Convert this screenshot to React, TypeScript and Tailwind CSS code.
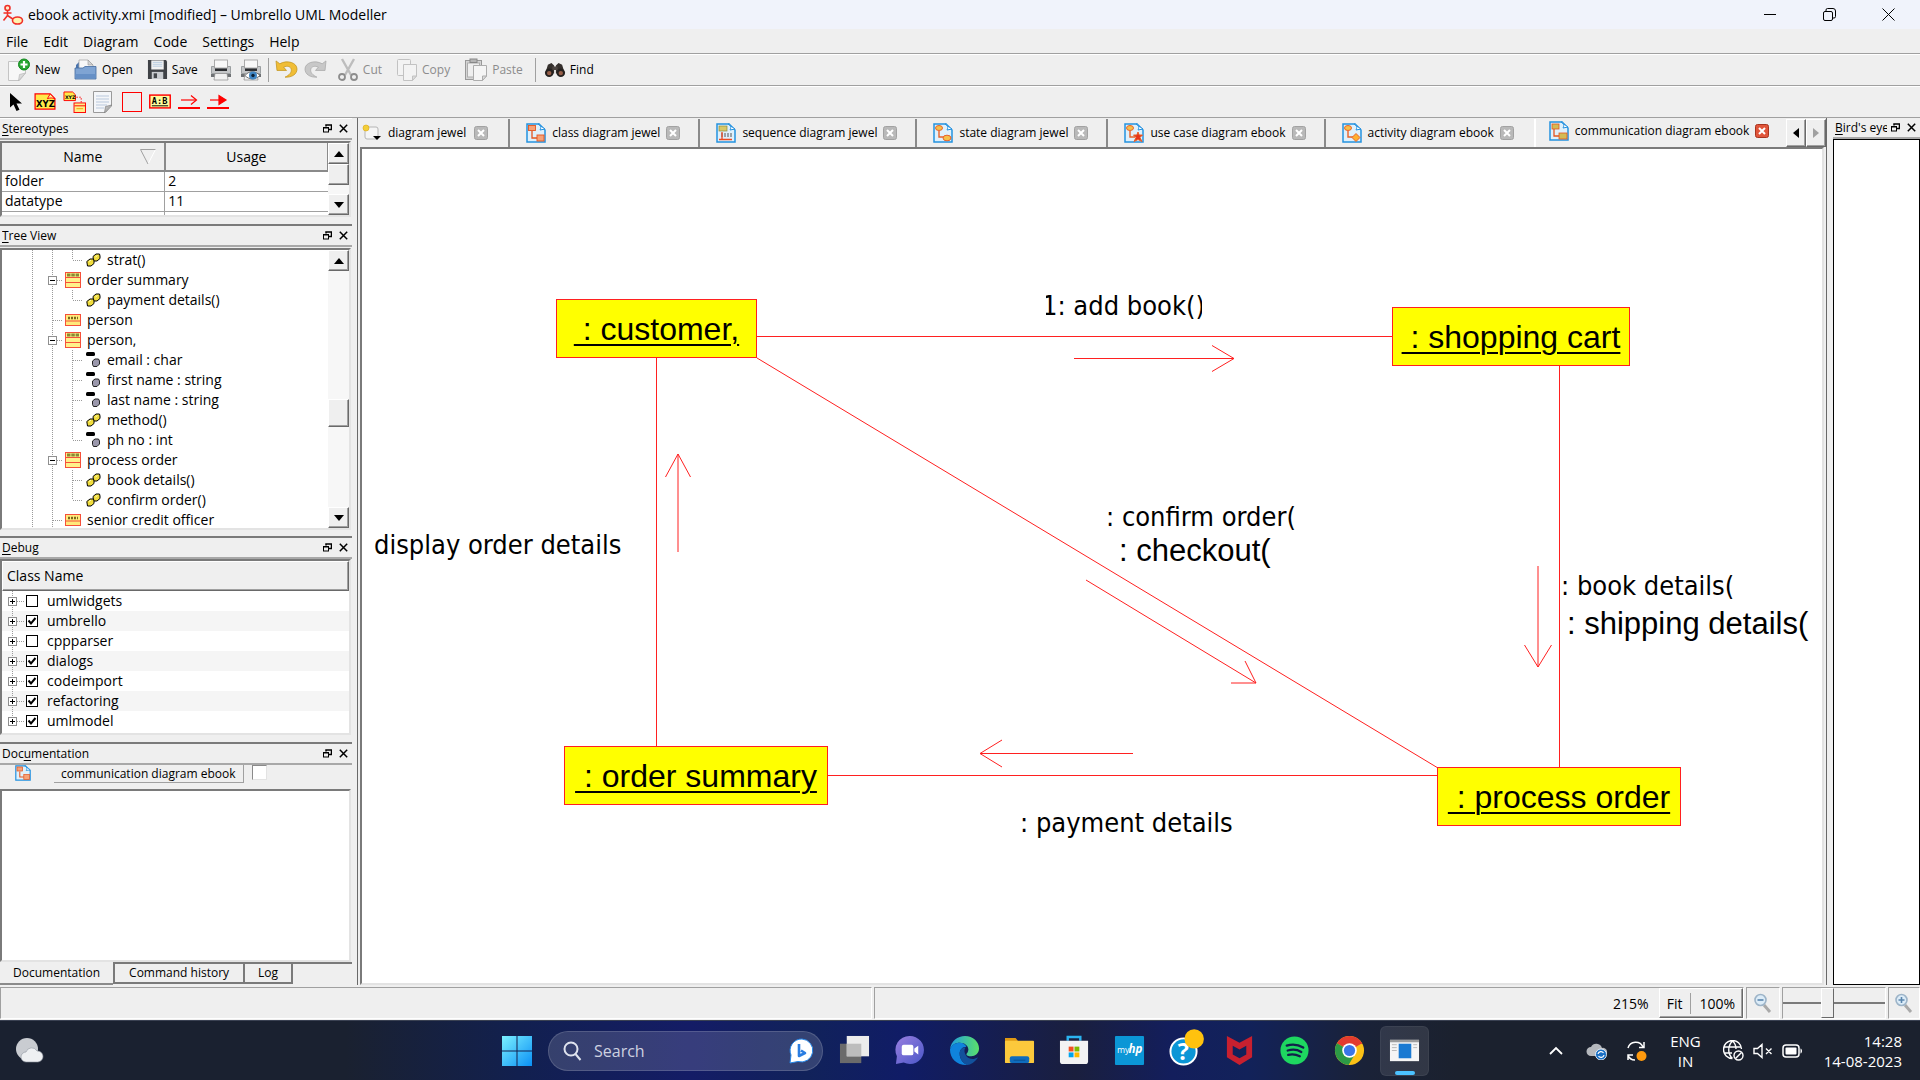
import React from "react";

const UI = "font-['Open_Sans','Noto_Sans',sans-serif]";
const RAISED =
  "bg-[#efefef] border border-t-white border-l-white border-r-[#696969] border-b-[#696969] shadow-[inset_-1px_-1px_0_#a0a0a0]";
const SUNKEN =
  "border-2 border-t-[#7a7a7a] border-l-[#7a7a7a] border-r-[#e3e3e3] border-b-[#e3e3e3]";

/* ---------- small drawings ---------- */

function AppLogo() {
  return (
    <svg width="22" height="22" viewBox="0 0 22 22" fill="none" stroke="#f03028" strokeWidth="1.6">
      <circle cx="5.500" cy="4" r="2.500" fill="#ffe9c8" />
      <path d="M5.500 6.500v5M1.500 9h8M5.500 11.500l-4 5M5.500 11.500l6 4" />
      <ellipse cx="15.500" cy="16.500" rx="5" ry="3.500" fill="#fff3b0" />
    </svg>
  );
}
function FloatIcon() {
  return (
    <svg width="9" height="9" viewBox="0 0 9 9" fill="none" stroke="#000" strokeWidth="1">
      <path d="M3 2.500V1h5.500v4.500H6M3 1h5.500" strokeWidth="1.500" />
      <rect x="0.500" y="3.500" width="5" height="4.500" />
      <path d="M0.500 4h5" />
    </svg>
  );
}
function CrossIcon() {
  return (
    <svg width="9" height="9" viewBox="0 0 9 9" stroke="#000" strokeWidth="1.5">
      <path d="M0.800 0.800l7.400 7.400M8.200 0.800L0.800 8.200" />
    </svg>
  );
}
function NewIcon() {
  return (
    <svg width="24" height="24" viewBox="0 0 24 24">
      <path d="M1.500 3.500h17V15l-6 7.500h-11z" fill="#f7f7f7" stroke="#c4c4c4" />
      <path d="M18.500 15l-7 7.500 1-6z" fill="#dcdcdc" stroke="#b0b0b0" strokeWidth=".6" />
      <circle cx="17" cy="6.500" r="5.500" fill="#2aa533" stroke="#128a1e" />
      <path d="M17 3v7M13.500 6.500h7" stroke="#fff" strokeWidth="2.200" />
    </svg>
  );
}
function OpenIcon() {
  return (
    <svg width="24" height="24" viewBox="0 0 24 24">
      <path d="M2 7l3-3h6v8H2z" fill="#4873ad" />
      <path d="M5 2h9l5 5v8H5z" fill="#f8f8f8" stroke="#a9a9a9" strokeWidth=".8" />
      <path d="M14 2v5h5z" fill="#d5d5d5" stroke="#999" strokeWidth=".6" />
      <path d="M1 10h8l2-1.500h11V21H1z" fill="#7fa4d3" stroke="#41699f" strokeWidth=".8" />
      <path d="M1.500 16h20v4.500h-20z" fill="#6690c6" />
    </svg>
  );
}
function SaveIcon() {
  return (
    <svg width="21" height="21" viewBox="0 0 22 22">
      <path d="M1 1h19l1 2v18H1z" fill="#3f4246" />
      <rect x="4.500" y="1.500" width="13" height="9.500" fill="#f2f2f2" />
      <path d="M6 3.500h10M6 5.500h10M6 7.500h10" stroke="#b5cbe0" />
      <rect x="5" y="13.500" width="12" height="7.500" fill="#c9ccd0" />
      <rect x="7" y="15" width="3.500" height="5" fill="#44474b" />
    </svg>
  );
}
function PrintIcon({ eye = false }: { eye?: boolean }) {
  return (
    <svg width="22" height="22" viewBox="0 0 22 22">
      <path d="M1.500 7.500h19v7h-19z" fill="#c3c5c7" stroke="#8b8f92" strokeWidth=".8" />
      <rect x="4.500" y="1" width="13" height="8" fill="#f8f8f8" stroke="#9a9a9a" strokeWidth=".8" />
      <path d="M5 9.500h12v2.500H5z" fill="#2b2d30" />
      <path d="M1 15h20v3H1z" fill="#6e7174" />
      <path d="M5 14.500h12l1 6.500H4z" fill="#f1f1f1" stroke="#8c8c8c" strokeWidth=".7" />
      {eye && (
        <g>
          <path d="M5 16.500c4-5 10-5 15 0-5 4.500-11 4.500-15 0z" fill="#fff" stroke="#555" strokeWidth=".8" />
          <circle cx="13" cy="16.500" r="4" fill="#3f86c4" />
          <circle cx="13" cy="16.500" r="1.700" fill="#0c2035" />
        </g>
      )}
    </svg>
  );
}
function UndoIcon() {
  return (
    <svg width="23" height="21" viewBox="0 0 24 22">
      <path
        d="M1 2l1 10h10L9 8.500c4-1.800 7.500-.5 8 2.500.5 3-2 6-6.500 8 7 .5 12.500-3 12.500-8.500C23 4 13 .5 5 5z"
        fill="#f0bd36"
        stroke="#c29420"
        strokeWidth=".8"
      />
    </svg>
  );
}
function RedoIcon() {
  return (
    <svg width="23" height="21" viewBox="0 0 24 22">
      <path
        d="M23 2l-1 10H12l3-3.500c-4-1.800-7.500-.5-8 2.500-.5 3 2 6 6.500 8C6.500 19.500 1 16 1 10.500 1 4 11 .5 19 5z"
        fill="#c8c8c8"
        stroke="#a9a9a9"
        strokeWidth=".8"
      />
    </svg>
  );
}
function CutIcon() {
  return (
    <svg width="22" height="24" viewBox="0 0 22 24" fill="none">
      <path d="M5 1l9 16M17 1L8 17" stroke="#bdbdbd" strokeWidth="2.400" />
      <circle cx="5" cy="19" r="3" stroke="#8d8d8d" strokeWidth="1.800" />
      <circle cx="17" cy="19" r="3" stroke="#8d8d8d" strokeWidth="1.800" />
    </svg>
  );
}
function CopyIcon() {
  return (
    <svg width="22" height="24" viewBox="0 0 22 24" fill="#f3f3f3" stroke="#c2c2c2">
      <rect x="1.500" y="1.500" width="13" height="16" rx="1" />
      <path d="M7.500 6.500h13V18l-4 4.500h-9z" />
      <path d="M20.500 18l-4 4.500V18z" fill="#ddd" />
    </svg>
  );
}
function PasteIcon() {
  return (
    <svg width="24" height="24" viewBox="0 0 24 24" stroke="#adadad">
      <rect x="1.500" y="2.500" width="16" height="19" fill="#d4d4d4" stroke="#999" />
      <rect x="3.500" y="5" width="12" height="14" fill="#efefef" />
      <rect x="6" y="1" width="7" height="3.500" fill="#b5b5b5" stroke="#888" />
      <path d="M9.500 7.500h13V18l-4 4.500h-9z" fill="#f5f5f5" />
      <path d="M22.500 18l-4 4.500V18z" fill="#ddd" />
    </svg>
  );
}
function FindIcon() {
  return (
    <svg width="22" height="16" viewBox="0 0 24 18">
      <path d="M4 3l4-2 3 3v9H1zM20 3l-4-2-3 3v9h10z" fill="#35302d" />
      <rect x="9" y="5" width="6" height="4" fill="#4c4541" />
      <circle cx="5.500" cy="12" r="4.800" fill="#25211f" />
      <circle cx="18.500" cy="12" r="4.800" fill="#25211f" />
      <circle cx="5.500" cy="12.500" r="2.500" fill="#98604a" />
      <circle cx="18.500" cy="12.500" r="2.500" fill="#98604a" />
    </svg>
  );
}
function PointerIcon() {
  return (
    <svg width="14" height="20" viewBox="0 0 14 20">
      <path d="M1 1v14.500l3.500-3 3 6.500 3-1.300-3-6.200H13z" fill="#000" />
    </svg>
  );
}
function ObjectIcon() {
  return (
    <svg width="22" height="17" viewBox="0 0 23 18">
      <path d="M1 1h16l5 5v11H1z" fill="#ffe94a" stroke="#f00" strokeWidth="1.300" />
      <path d="M17 1l-3 5c3-1 5-1 8 0z" fill="#fff0a0" stroke="#f00" />
      <text x="2" y="14.500" fontSize="9" fontWeight="700" fontFamily="DejaVu Sans, sans-serif">XYZ</text>
    </svg>
  );
}
function AnchorIcon() {
  return (
    <svg width="23" height="22" viewBox="0 0 24 23">
      <path d="M1 1h9l3 3v6H1z" fill="#ffe94a" stroke="#f00" />
      <text x="2" y="8.500" fontSize="5" fontWeight="700" fontFamily="DejaVu Sans, sans-serif">XYZ</text>
      <path d="M14 6.500h5V12" stroke="#f00" fill="none" strokeDasharray="1.500 1.500" />
      <rect x="11.500" y="12.500" width="12" height="10" fill="#ffee8a" stroke="#f00" />
      <path d="M12 15.500h11" stroke="#f00" />
      <path d="M14 18.500h7" stroke="#e8a800" />
    </svg>
  );
}
function NoteIcon() {
  return (
    <svg width="19" height="22" viewBox="0 0 19 22">
      <path d="M.5.500h18V15l-6 6.500H.5z" fill="#f4f6f9" stroke="#9a9a9a" />
      <path d="M3 5h13M3 8h13M3 11h13M3 14h11M3 17h8" stroke="#b9c8dc" />
      <path d="M18.500 14l-7 7.500 1-6z" fill="#b9b9b9" stroke="#777" strokeWidth=".6" />
    </svg>
  );
}
function BoxIcon() {
  return (
    <svg width="20" height="20" viewBox="0 0 20 20">
      <rect x=".5" y=".5" width="19" height="19" fill="none" stroke="#f00" />
    </svg>
  );
}
function ABIcon() {
  return (
    <svg width="22" height="15" viewBox="0 0 23 15">
      <rect x=".8" y=".8" width="21.400" height="13.400" fill="#fffc9c" stroke="#f00" strokeWidth="1.500" />
      <text x="3" y="10" fontSize="9" fontWeight="700" fontFamily="DejaVu Sans Mono, monospace">A:B</text>
      <path d="M3 12h17" stroke="#000" />
    </svg>
  );
}
function MessageIcon({ solid = false }: { solid?: boolean }) {
  return (
    <svg width="22" height="16" viewBox="0 0 22 16" fill="none" stroke="#f00" strokeWidth="1.200">
      <path d="M3 6h15" />
      {solid ? <path d="M12 1.500v9L19 6z" fill="#f00" /> : <path d="M13 1.500L18.500 6 13 10.500" />}
      <path d="M0 14h22" strokeWidth="2" />
    </svg>
  );
}

type DiagramKind = "class" | "sequence" | "state" | "usecase" | "activity" | "communication";
function DiagramIcon({ kind, small = false }: { kind: DiagramKind; small?: boolean }) {
  const px = small ? 16 : 20;
  return (
    <svg width={px} height={px} viewBox="0 0 20 20" className="shrink-0">
      <path d="M1 1h12l6 6v12H1z" fill="#dff0fb" stroke="#2592e0" strokeWidth="1.500" />
      <path d="M12 1c4 0 3 4 2 6l5-1z" fill="#fff" stroke="#2592e0" />
      {kind === "class" && (
        <g fill="#f7a277" stroke="#e5551f" strokeWidth=".9">
          <rect x="2.500" y="2.500" width="7" height="5" />
          <rect x="11" y="12" width="7" height="6" />
          <path d="M6 8v7h5" fill="none" strokeWidth="1.300" />
        </g>
      )}
      {kind === "sequence" && (
        <g>
          <rect x="3" y="3" width="8" height="5" fill="#d8c867" stroke="#8d8d40" strokeWidth=".7" />
          <path d="M5 11h12M5 13h12" stroke="#555" strokeDasharray="2 1" />
          <path d="M3 16.500h13M6 9v8" stroke="#ee4a20" strokeWidth="1.300" />
        </g>
      )}
      {(kind === "state" || kind === "usecase" || kind === "activity") && (
        <g fill="#f5c04a" stroke="#e8622a" strokeWidth="1">
          <ellipse cx="6" cy="5" rx="3.500" ry="2.500" />
          <path d="M6 8v6h5" fill="none" strokeWidth="1.400" />
          {kind === "state" && <ellipse cx="14" cy="15" rx="4" ry="2.800" />}
          {kind === "usecase" && <path d="M14 9l1.200 3 3.300 0-2.500 2.500 2 4-4-2-4 2 2-4L9.500 12l3.300 0z" fill="#e8341a" />}
          {kind === "activity" && <path d="M14 10.500l4 4-4 4-4-4z" fill="#ffb02e" />}
        </g>
      )}
      {kind === "communication" && (
        <g fill="#d3bb55" stroke="#e5551f" strokeWidth=".8">
          <rect x="3" y="3" width="7" height="5" />
          <rect x="10" y="12" width="8" height="6" />
          <path d="M5 8v7h5" fill="none" strokeWidth="1.300" />
        </g>
      )}
    </svg>
  );
}
function ClassIcon({ compact = false }: { compact?: boolean }) {
  return (
    <svg width="16" height="16" viewBox="0 0 16 16" className="shrink-0">
      {compact ? (
        <g>
          <rect x=".5" y="2.500" width="15" height="11" fill="#ffe97a" stroke="#f5503a" />
          <path d="M1 9h14" stroke="#f5503a" />
          <path d="M3 6h10" stroke="#7b6a1c" strokeWidth="2.500" strokeDasharray="2 1" />
        </g>
      ) : (
        <g>
          <rect x=".5" y=".5" width="15" height="15" fill="#fff18a" stroke="#f5503a" />
          <path d="M1 5.500h14M1 10.500h14" stroke="#f5503a" />
          <path d="M2 3h12" stroke="#8a8a32" strokeWidth="3" strokeDasharray="3.500 .8" />
        </g>
      )}
    </svg>
  );
}
function MethodIcon() {
  return (
    <svg width="15" height="14" viewBox="0 0 15 14" className="shrink-0" fill="#f0dc3c" stroke="#000" strokeWidth="1">
      <path d="M7 3.500L10 1h3.500l.5 2v2.500L11 8H7.500z" />
      <path d="M.8 8.500L4 6h3.500l.5 2v2.500L5 13H1.500z" />
      <path d="M3 8.500l2-1.300M9.500 4l2-1.500" stroke="#fff9b5" />
    </svg>
  );
}
function FieldIcon() {
  return (
    <svg width="15" height="16" viewBox="0 0 15 16" className="shrink-0">
      <rect x="0" y="0" width="9" height="4" rx="1.500" fill="#000" />
      <path d="M6.500 9L9 7h3.500l1 2v3L11 14.500H7.500l-1-2z" fill="#9a97ab" stroke="#222" />
    </svg>
  );
}

/* ---------- docks ---------- */

function DockTitle({ before = "", mark, after }: { before?: string; mark: string; after: string }) {
  return (
    <header className="flex h-[21px] shrink-0 items-center border-b-2 border-[#a8a8a8] pl-[2px] pr-[1px] text-[12px]">
      <h2 className="min-w-0 flex-1 overflow-hidden whitespace-nowrap">
        {before}
        <span className="underline underline-offset-2">{mark}</span>
        {after}
      </h2>
      <button aria-label={"Float " + before + mark + after} className="flex h-4 w-4 shrink-0 items-center justify-center">
        <FloatIcon />
      </button>
      <button aria-label={"Close " + before + mark + after} className="flex h-4 w-4 shrink-0 items-center justify-center">
        <CrossIcon />
      </button>
    </header>
  );
}
function Arrow({ dir }: { dir: "up" | "down" }) {
  return (
    <svg width="10" height="6" viewBox="0 0 10 6">
      <path d={dir === "up" ? "M0 6L5 0l5 6z" : "M0 0l5 6 5-6z"} fill="#000" />
    </svg>
  );
}
function ScrollBar({ label, thumb }: { label: string; thumb: string }) {
  return (
    <div className="flex w-[21px] shrink-0 flex-col bg-[#f7f7f7]">
      <button aria-label={label + " scroll up"} className={"flex h-[21px] shrink-0 items-center justify-center " + RAISED}>
        <Arrow dir="up" />
      </button>
      <div className="flex-1">
        <div className={thumb + " " + RAISED} />
      </div>
      <button aria-label={label + " scroll down"} className={"flex h-[21px] shrink-0 items-center justify-center " + RAISED}>
        <Arrow dir="down" />
      </button>
    </div>
  );
}

type Guide = "v" | "t" | "l" | "minus";
function TreeGuide({ kind }: { kind: Guide }) {
  return (
    <svg width="20" height="20" viewBox="0 0 20 20" className="shrink-0" fill="none" stroke="#9a9a9a">
      <g strokeDasharray="1 1">
        <path d={kind === "l" ? "M10.500 0v10" : "M10.500 0v20"} />
        {kind !== "v" && <path d="M11 10.500h9" />}
      </g>
      {kind === "minus" && (
        <g>
          <rect x="6.500" y="6.500" width="8" height="8" fill="#fff" stroke="#8f8f8f" />
          <path d="M8 10.500h5" stroke="#000" />
        </g>
      )}
    </svg>
  );
}

type Node = { text: string; icon: "class" | "compact" | "method" | "field"; guide: Guide };
const tree: Node[] = [
  { text: "strat()", icon: "method", guide: "l" },
  { text: "order summary", icon: "class", guide: "minus" },
  { text: "payment details()", icon: "method", guide: "l" },
  { text: "person", icon: "compact", guide: "t" },
  { text: "person,", icon: "class", guide: "minus" },
  { text: "email : char", icon: "field", guide: "t" },
  { text: "first name : string", icon: "field", guide: "t" },
  { text: "last name : string", icon: "field", guide: "t" },
  { text: "method()", icon: "method", guide: "t" },
  { text: "ph no : int", icon: "field", guide: "l" },
  { text: "process order", icon: "class", guide: "minus" },
  { text: "book details()", icon: "method", guide: "t" },
  { text: "confirm order()", icon: "method", guide: "l" },
  { text: "senior credit officer", icon: "compact", guide: "t" },
];

function TreeRow({ node }: { node: Node }) {
  const member = node.icon === "method" || node.icon === "field";
  return (
    <li className="flex h-5 items-center pl-5">
      <TreeGuide kind="v" />
      {member && <TreeGuide kind="v" />}
      <TreeGuide kind={node.guide} />
      <span className={member ? "ml-1 flex items-center gap-1.5" : "ml-[3px] flex items-center gap-1.5"}>
        {node.icon === "class" && <ClassIcon />}
        {node.icon === "compact" && <ClassIcon compact />}
        {node.icon === "method" && <MethodIcon />}
        {node.icon === "field" && <FieldIcon />}
        <span className="whitespace-nowrap text-[14px] leading-5">{node.text}</span>
      </span>
    </li>
  );
}

const debugClasses = [
  { name: "umlwidgets", on: false },
  { name: "umbrello", on: true },
  { name: "cppparser", on: false },
  { name: "dialogs", on: true },
  { name: "codeimport", on: true },
  { name: "refactoring", on: true },
  { name: "umlmodel", on: true },
];

function DebugRow({ name, on, last }: { name: string; on: boolean; last: boolean }) {
  return (
    <li className="flex h-5 items-center pl-[2px] even:bg-[#f5f5f5]">
      <button aria-label={"Expand " + name}>
        <svg width="20" height="20" viewBox="0 0 20 20" fill="none" stroke="#9a9a9a">
          <path d={last ? "M8.500 0v10" : "M8.500 0v20"} strokeDasharray="1 1" />
          <path d="M9 10.500h11" strokeDasharray="1 1" />
          <rect x="4.500" y="6.500" width="8" height="8" fill="#fff" stroke="#8f8f8f" />
          <path d="M6 10.500h5M8.500 8v5" stroke="#000" />
        </svg>
      </button>
      <label className="flex items-center gap-[9px]">
        <span className="relative ml-[2px] block h-3 w-3">
          <input type="checkbox" defaultChecked={on} className="peer block h-3 w-3 appearance-none border border-black bg-white" />
          <svg className="pointer-events-none absolute inset-0 hidden peer-checked:block" width="12" height="12" viewBox="0 0 12 12">
            <path d="M2.500 5.500l2.500 3L9.500 3" fill="none" stroke="#000" strokeWidth="2" />
          </svg>
        </span>
        <span className="text-[14px] leading-5">{name}</span>
      </label>
    </li>
  );
}

function LeftDocks() {
  return (
    <aside className="flex w-[352px] shrink-0 flex-col">
      <section className="flex flex-col border-t border-white">
        <DockTitle mark="S" after="tereotypes" />
        <div className={"mt-[1px] mr-[1px] flex h-[76px] overflow-hidden bg-white " + SUNKEN}>
          <div className="h-full flex-1 overflow-hidden">
            <table className="w-full table-fixed border-collapse text-[14px]">
              <thead>
                <tr className="h-[28px] bg-[#efefef]">
                  <th className="border-b-2 border-r-2 border-[#8a8a8a] p-0 font-normal">
                    <span className="flex items-center pr-2">
                      <span className="flex-1 pl-6 text-center">Name</span>
                      <svg width="16" height="16" viewBox="0 0 16 16" fill="none">
                        <path d="M15.500.500L8 15" stroke="#fff" />
                        <path d="M15.500.500H.5L8 15" stroke="#a0a0a0" />
                      </svg>
                    </span>
                  </th>
                  <th className="border-b-2 border-r border-[#8a8a8a] p-0 font-normal">Usage</th>
                </tr>
              </thead>
              <tbody>
                {[["folder", "2"], ["datatype", "11"], ["", ""]].map((r, i) => (
                  <tr key={i} className="h-5 border-b border-[#a0a0a0]">
                    <td className="border-r border-[#a0a0a0] p-0 pl-[3px] leading-[18px]">{r[0]}</td>
                    <td className="p-0 pl-[3px] leading-[18px]">{r[1]}</td>
                  </tr>
                ))}
              </tbody>
            </table>
          </div>
          <ScrollBar label="Stereotypes" thumb="h-[21px]" />
        </div>
      </section>

      <section className="mt-[7px] flex flex-col border-t-2 border-[#7a7a7a]">
        <DockTitle mark="T" after="ree View" />
        <div className={"mt-[1px] mr-[1px] flex h-[282px] overflow-hidden bg-white " + SUNKEN}>
          <ul className="flex-1">
            {tree.map((n) => (
              <TreeRow key={n.text} node={n} />
            ))}
          </ul>
          <ScrollBar label="Tree" thumb="mt-[128px] h-7" />
        </div>
      </section>

      <section className="mt-[6px] flex flex-col border-t-2 border-[#7a7a7a]">
        <DockTitle mark="D" after="ebug" />
        <div className={"mr-[1px] h-[176px] bg-white " + SUNKEN}>
          <div className={"flex h-[30px] items-center pb-[2px] pl-1 text-[14px] " + RAISED}>Class Name</div>
          <ul>
            {debugClasses.map((c, i) => (
              <DebugRow key={c.name} name={c.name} on={c.on} last={i === debugClasses.length - 1} />
            ))}
          </ul>
        </div>
      </section>

      <section className="mt-[7px] flex min-h-0 flex-1 flex-col border-t-2 border-[#7a7a7a]">
        <DockTitle before="Doc" mark="u" after="mentation" />
        <div className="flex h-6 shrink-0 items-start pl-[15px]">
          <DiagramIcon kind="class" small />
          <span className="ml-[23px] border-r border-b border-[#a0a0a0] px-[7px] text-[12px] leading-[17px]">communication diagram ebook</span>
          <input
            type="checkbox"
            aria-label="Documentation modified"
            className="ml-2 h-[15px] w-[15px] appearance-none border border-t-[#8a8a8a] border-l-[#8a8a8a] border-r-[#e3e3e3] border-b-[#e3e3e3] bg-white"
          />
        </div>
        <textarea aria-label="Documentation" className={"mr-[1px] block min-h-0 flex-1 resize-none bg-white " + SUNKEN} />
        <div role="tablist" className="flex h-[23px] shrink-0 items-start text-[12px]">
          <button role="tab" aria-selected="true" className="h-[23px] border-b-2 border-[#8a8a8a] px-[13px]">Documentation</button>
          <button role="tab" aria-selected="false" className="h-[22px] border-2 border-[#7a7a7a] px-[14px]">Command history</button>
          <button role="tab" aria-selected="false" className="h-[22px] border-2 border-l-0 border-[#7a7a7a] px-[13px]">Log</button>
          <span className="flex-1 border-t-2 border-[#7a7a7a]" />
        </div>
      </section>
    </aside>
  );
}

/* ---------- editor ---------- */

const tabs: { title: string; kind: DiagramKind }[] = [
  { title: "class diagram jewel", kind: "class" },
  { title: "sequence diagram jewel", kind: "sequence" },
  { title: "state diagram jewel", kind: "state" },
  { title: "use case diagram ebook", kind: "usecase" },
  { title: "activity diagram ebook", kind: "activity" },
  { title: "communication diagram ebook", kind: "communication" },
];

function TabClose({ title, active = false }: { title: string; active?: boolean }) {
  return (
    <button aria-label={"Close " + title} className="shrink-0">
      <svg width="14" height="14" viewBox="0 0 14 14">
        <rect x=".5" y=".5" width="13" height="13" rx="2" fill={active ? "#e0553a" : "#b9b9b9"} stroke={active ? "#a8341f" : "#a2a2a2"} />
        <path d="M4 4l6 6M10 4l-6 6" stroke="#fff" strokeWidth="2" />
      </svg>
    </button>
  );
}

function TabBar() {
  return (
    <div className="flex h-7 shrink-0 items-stretch overflow-hidden text-[12px]">
      <button aria-label="New diagram" className="ml-1 w-5 shrink-0">
        <svg width="20" height="20" viewBox="0 0 20 20">
          <rect x="3" y="4" width="13" height="12" rx="2" fill="#f5f5f5" stroke="#b5b5b5" />
          <circle cx="4" cy="5" r="3" fill="#f3cf3a" stroke="#dca810" strokeWidth=".6" />
          <path d="M11 13h8l-4 4z" fill="#000" />
        </svg>
      </button>
      <div role="tablist" className="flex min-w-0 flex-1">
        <div role="tab" className="flex shrink-0 items-center gap-2 border-r-2 border-[#8a8a8a] pl-1.5 pr-5">
          <span>diagram jewel</span>
          <TabClose title="diagram jewel" />
        </div>
        {tabs.map((t, i) => {
          const active = i === tabs.length - 1;
          return (
            <div
              key={t.title}
              role="tab"
              aria-selected={active}
              className={
                active
                  ? "flex min-w-0 flex-1 items-center gap-[6px] border-l-2 border-white pl-[13px] pb-1"
                  : i === tabs.length - 2
                    ? "flex shrink-0 items-center gap-[6px] pl-4 pr-5"
                    : "flex shrink-0 items-center gap-[6px] border-r-2 border-[#8a8a8a] pl-4 pr-[18px]"
              }
            >
              <DiagramIcon kind={t.kind} />
              <span className="whitespace-nowrap">{t.title}</span>
              <TabClose title={t.title} active={active} />
            </div>
          );
        })}
      </div>
      <button aria-label="Scroll tabs left" className={"flex w-5 items-center justify-center " + RAISED}>
        <svg width="6" height="10" viewBox="0 0 6 10"><path d="M6 0v10L0 5z" fill="#000" /></svg>
      </button>
      <button aria-label="Scroll tabs right" className={"flex w-5 items-center justify-center " + RAISED}>
        <svg width="6" height="10" viewBox="0 0 6 10"><path d="M0 0v10l6-5z" fill="#a0a0a0" /></svg>
      </button>
    </div>
  );
}

function ObjectBox({ text, place }: { text: string; place: string }) {
  return (
    <div
      className={
        "absolute flex h-[59px] items-center justify-center whitespace-pre border border-[#ff2020] bg-[#ffff00] font-['Liberation_Sans',Arial,sans-serif] text-[32px] underline decoration-2 underline-offset-4 " +
        place
      }
    >
      {text}
    </div>
  );
}
function Label({ text, place, inner = "" }: { text: string; place: string; inner?: string }) {
  return (
    <div className={"absolute whitespace-pre font-['DejaVu_Sans_Condensed','Open_Sans',sans-serif] text-[27px] leading-8 " + place}>
      <span className={"inline-block " + inner}>{text}</span>
    </div>
  );
}
function ArialLabel({ text, place }: { text: string; place: string }) {
  return (
    <div className={"absolute whitespace-pre font-['Liberation_Sans',Arial,sans-serif] text-[31px] leading-9 " + place}>{text}</div>
  );
}

function Canvas() {
  return (
    <div className={"relative mx-[2px] min-h-0 flex-1 overflow-hidden bg-white " + SUNKEN}>
      <svg className="absolute top-0 left-0" width="1460" height="830" viewBox="362 149 1460 830" fill="none" stroke="#ff2020" strokeWidth="1">
        <path d="M756 336.500H1393M656.500 358V746M757 358L1438 768M1559.500 366V768M828 775.500H1438" />
        <path d="M1074 358.500H1234M1212 345.500l22 13-22 13" />
        <path d="M678 552V454M665.500 477l12.500-23 12.500 23" />
        <path d="M1086 580l170 103M1245 661l11 22h-25" />
        <path d="M1538 566V667M1524.500 645l13.500 22 13.500-22" />
        <path d="M1133 753.500H980M1002 740l-22 13.500 22 13.500" />
      </svg>
      <ObjectBox text=" : customer," place="left-[194px] top-[150px] w-[201px]" />
      <ObjectBox text=" : shopping cart" place="left-[1030px] top-[158px] w-[238px]" />
      <ObjectBox text=" : order summary" place="left-[202px] top-[597px] w-[264px]" />
      <ObjectBox text=" : process order" place="left-[1075px] top-[618px] w-[244px]" />
      <Label text="1: add book()" place="left-[684px] top-[141px] w-[156px] overflow-hidden" inner="-ml-1" />
      <Label text="display order details" place="left-[12px] top-[380px] w-[246px]" />
      <Label text=": confirm order(" place="left-[744px] top-[352px]" />
      <ArialLabel text=": checkout(" place="left-[757px] top-[384px]" />
      <Label text=": book details(" place="left-[1199px] top-[421px]" />
      <ArialLabel text=": shipping details(" place="left-[1205px] top-[457px]" />
      <Label text=": payment details" place="left-[658px] top-[658px]" />
    </div>
  );
}

/* ---------- task bar ---------- */

function Magnifier({ sign }: { sign: "+" | "-" }) {
  return (
    <svg width="20" height="20" viewBox="0 0 20 20" fill="none">
      <path d="M11 12l6 7" stroke="#a9a9a9" strokeWidth="3" />
      <circle cx="7.500" cy="7" r="5.500" fill="#dcecf8" stroke="#9db4c8" strokeWidth="1.600" />
      <path d={sign === "+" ? "M4.500 7h6M7.500 4v6" : "M4.500 7h6"} stroke="#5b86ad" strokeWidth="1.600" />
    </svg>
  );
}

function StatusBar() {
  const cell = "border-t border-l border-[#a0a0a0] border-r border-b border-r-white border-b-white";
  return (
    <footer className="flex h-[35px] shrink-0 items-stretch gap-[2px] pt-[2px] pb-[1px] text-[14px]">
      <div className={"basis-[872px] " + cell} />
      <div className={"flex min-w-0 flex-1 items-stretch justify-end " + cell}>
        <span className="flex items-center pr-[10px]">215%</span>
        <div className={"flex items-center px-[7px] " + RAISED}>
          <button className="pr-2">Fit</button>
          <button className="border-l border-[#a0a0a0] pl-2">100%</button>
        </div>
      </div>
      <button aria-label="Zoom out" className={"flex w-[34px] items-center justify-center " + cell}>
        <Magnifier sign="-" />
      </button>
      <div className={"flex w-[104px] items-center " + cell}>
        <input
          type="range"
          aria-label="Zoom"
          defaultValue={43}
          className="h-[30px] w-full appearance-none bg-transparent [&::-webkit-slider-runnable-track]:h-[2px] [&::-webkit-slider-runnable-track]:bg-[#7a7a7a] [&::-webkit-slider-thumb]:-mt-[14px] [&::-webkit-slider-thumb]:h-[30px] [&::-webkit-slider-thumb]:w-[13px] [&::-webkit-slider-thumb]:appearance-none [&::-webkit-slider-thumb]:border [&::-webkit-slider-thumb]:border-t-white [&::-webkit-slider-thumb]:border-l-white [&::-webkit-slider-thumb]:border-r-[#696969] [&::-webkit-slider-thumb]:border-b-[#696969] [&::-webkit-slider-thumb]:bg-[#efefef]"
        />
      </div>
      <button aria-label="Zoom in" className={"flex w-[32px] items-center justify-center " + cell}>
        <Magnifier sign="+" />
      </button>
    </footer>
  );
}

const apps: { name: string; art: React.ReactNode }[] = [
  {
    name: "Task view",
    art: (
      <g>
        <rect x="1" y="9" width="22" height="20" fill="#6b6b6b" />
        <rect x="8" y="1" width="23" height="21" fill="#ececec" />
        <rect x="8" y="9" width="15" height="13" fill="#bdbdbd" />
      </g>
    ),
  },
  {
    name: "Chat",
    art: (
      <g>
        <path d="M16 1a14.500 14.500 0 1 1-6 27.500L2 30l1-8A14.500 14.500 0 0 1 16 1z" fill="url(#chat)" />
        <rect x="8" y="10" width="12" height="11" rx="2" fill="#fff" />
        <path d="M21 14l4-3v9l-4-3z" fill="#fff" />
      </g>
    ),
  },
  {
    name: "Edge",
    art: (
      <g>
        <path d="M1 15C2 6 9 1 16.500 1 25 1 31 7 31 14c0 5-4 8-8 8-3 0-5-1-5-2s2-2 2-5c0-4-4-7-9-7-4 0-8 2-10 7z" fill="url(#edge)" />
        <path d="M1 15c2-5 6-7 10-7 4 0 6 2 7 4-4 0-7 3-7 7 0 6 4 11 9 12-11 1-19-6-19-16z" fill="#0f83dc" />
        <path d="M11 19c0-4 3-6 6-6-2 3-1 6 1 9 3 3 7 4 12 1-3 5-8 8-11 8-5-2-8-7-8-12z" fill="#12519c" />
      </g>
    ),
  },
  {
    name: "File Explorer",
    art: (
      <g>
        <path d="M1 3h11l3 4v6H1z" fill="#e09a13" />
        <rect x="1" y="6" width="30" height="23" rx="1" fill="#fcc93c" />
        <rect x="6" y="22" width="20" height="7" rx="2" fill="#0f6cbd" />
        <path d="M10 26h12" stroke="#0a4f8f" />
      </g>
    ),
  },
  {
    name: "Microsoft Store",
    art: (
      <g>
        <path d="M9 6V2h13v4" fill="none" stroke="#2bb3ef" strokeWidth="2.500" />
        <path d="M1 6h29v21a3 3 0 0 1-3 3H4a3 3 0 0 1-3-3z" fill="#f3f3f3" />
        <path d="M10 12h5v5h-5z" fill="#f25022" />
        <path d="M16 12h5v5h-5z" fill="#7fba00" />
        <path d="M10 18h5v5h-5z" fill="#00a4ef" />
        <path d="M16 18h5v5h-5z" fill="#ffb900" />
      </g>
    ),
  },
  {
    name: "myHP",
    art: (
      <g>
        <rect x="1" y="1" width="30" height="30" rx="1" fill="#0b96d6" />
        <text x="3" y="19" fill="#fff" fontSize="9" fontFamily="Open Sans, sans-serif">my</text>
        <text x="15" y="19" fill="#fff" fontSize="12" fontStyle="italic" fontWeight="700" fontFamily="Open Sans, sans-serif">hp</text>
      </g>
    ),
  },
  {
    name: "HP Support Assistant",
    art: (
      <g>
        <circle cx="15" cy="17" r="13.500" fill="#0b96d6" stroke="#fff" strokeWidth="2" />
        <text x="9" y="26" fill="#fff" fontSize="24" fontWeight="700" fontFamily="Open Sans, sans-serif">?</text>
        <circle cx="26" cy="4" r="10" fill="#ffc20e" />
      </g>
    ),
  },
  { name: "McAfee", art: <path d="M3 1l13 7 13-7v22l-13 8-13-8zM9 11v9l7 4 7-4v-9l-7 4z" fill="#c8202f" fillRule="evenodd" /> },
  {
    name: "Spotify",
    art: (
      <g>
        <circle cx="16" cy="16" r="14.500" fill="#1ed760" />
        <path d="M8 11c6-2 12-1 17 2M9 16c5-1.500 10-1 14 1.500M9.500 20.500c4-1 8-.6 12 1.500" fill="none" stroke="#12204a" strokeWidth="2.400" strokeLinecap="round" />
      </g>
    ),
  },
  {
    name: "Chrome",
    art: (
      <g>
        <circle cx="16" cy="16" r="15" fill="#fbc116" />
        <path d="M16 16L3 8.500A15 15 0 0 1 29 8.500z" fill="#e33b2e" />
        <path d="M16 16L3 8.500A15 15 0 0 0 15 31l6-10z" fill="#2c9a46" />
        <path d="M16 8.500h13" stroke="#e33b2e" strokeWidth="1" />
        <circle cx="16" cy="16" r="7.500" fill="#fff" />
        <circle cx="16" cy="16" r="5.800" fill="#3a76e8" />
      </g>
    ),
  },
  {
    name: "Umbrello",
    art: (
      <g>
        <rect x="1" y="5" width="30" height="22" fill="#f5f5f5" />
        <rect x="1" y="5" width="30" height="2.500" fill="#9c9c9c" />
        <rect x="10" y="9" width="13" height="15" fill="#1b7ad2" />
        <path d="M3 10h5M3 13h5M3 16h5M25 10h4M25 13h4" stroke="#b9b9b9" />
      </g>
    ),
  },
];

function TaskBar() {
  return (
    <nav
      aria-label="Taskbar"
      className="flex h-[60px] shrink-0 items-center border-t border-[#3a4152] bg-[linear-gradient(90deg,#1a2130_0%,#1a2130_18%,#12204f_27%,#141c66_36%,#11225a_42%,#101c66_47%,#1a1f3e_56%,#131e5c_61%,#12225a_65%,#1a2238_71%,#1b212e_76%,#1b212e_100%)] text-white"
    >
      <div className="flex-1 pl-[14px]">
        <button aria-label="Weather" className="block">
          <svg width="30" height="30" viewBox="0 0 30 30">
            <circle cx="13" cy="13" r="11" fill="#c9ccd1" />
            <path d="M12 26a5 5 0 0 1 0-10 6 6 0 0 1 11-1 5.500 5.500 0 0 1 1 11z" fill="#eef0f2" stroke="#8b929c" strokeWidth=".6" />
          </svg>
        </button>
      </div>
      <div className="flex shrink-0 items-center pl-[18px]">
        <button aria-label="Start" className="mr-4">
          <svg width="30" height="30" viewBox="0 0 30 30">
            <defs>
              <linearGradient id="win" x1="0" y1="0" x2="1" y2="1">
                <stop offset="0" stopColor="#7bf0ff" />
                <stop offset="1" stopColor="#0a90f5" />
              </linearGradient>
              <linearGradient id="chat" x1="0" y1="0" x2="1" y2="1">
                <stop offset="0" stopColor="#9a7fe0" />
                <stop offset="1" stopColor="#4a57c8" />
              </linearGradient>
              <linearGradient id="edge" x1="0" y1="0.500" x2="1" y2="0.500">
                <stop offset="0" stopColor="#1f9de0" />
                <stop offset="1" stopColor="#5be06a" />
              </linearGradient>
            </defs>
            <path d="M0 0h14.500v14.500H0zM15.500 0H30v14.500H15.500zM0 15.500h14.500V30H0zM15.500 15.500H30V30H15.500z" fill="url(#win)" />
          </svg>
        </button>
        <div className="flex h-10 w-[275px] items-center rounded-full border border-white/15 bg-white/15 pl-[14px] pr-2">
          <svg width="19" height="20" viewBox="0 0 19 20" fill="none" stroke="#dfe3ee" strokeWidth="2">
            <circle cx="8" cy="8" r="6.500" />
            <path d="M12.500 13l5 6" />
          </svg>
          <input aria-label="Search" placeholder="Search" className="ml-3 min-w-0 flex-1 bg-transparent text-[16px] outline-none placeholder:text-[#cdd1e0]" />
          <svg width="25" height="26" viewBox="0 0 25 26">
            <path d="M13 1a11.500 11.500 0 1 1-4 22.500L1 25l1-8A11.500 11.500 0 0 1 13 1z" fill="#fff" stroke="#2486e8" />
            <path d="M10 6v12l6-3-4-2.500" fill="none" stroke="#2a7de1" strokeWidth="2.600" strokeLinejoin="round" />
          </svg>
        </div>
        <div className="flex pl-1">
          {apps.map((a, i) => (
            <button
              key={a.name}
              aria-label={a.name}
              className={
                i === apps.length - 1
                  ? "relative mx-[3px] flex h-[50px] w-[49px] items-center justify-center rounded-md border border-white/5 bg-white/10"
                  : "flex h-[50px] w-[55px] items-center justify-center"
              }
            >
              <svg width="31" height="31" viewBox="0 0 32 32" className="overflow-visible">
                {a.art}
              </svg>
              {i === apps.length - 1 && <span className="absolute bottom-0 h-1 w-5 rounded-full bg-[#4cc2ff]" />}
            </button>
          ))}
        </div>
      </div>
      <div className="flex flex-1 items-center justify-end pr-[18px] text-[15px] leading-5">
        <button aria-label="Hidden icons" className="mr-[23px]">
          <svg width="14" height="9" viewBox="0 0 14 9" fill="none" stroke="#fff" strokeWidth="1.800"><path d="M1 8l6-6 6 6" /></svg>
        </button>
        <button aria-label="OneDrive" className="mr-[18px]">
          <svg width="22" height="18" viewBox="0 0 22 18">
            <path d="M5 14a4.500 4.500 0 0 1 0-9 6 6 0 0 1 11 1 4 4 0 0 1 2 8z" fill="#b5b8bd" />
            <circle cx="15" cy="12.500" r="5.500" fill="#1a6fc4" stroke="#fff" strokeWidth=".8" />
            <path d="M12 12a3 3 0 0 1 5.500-1M18 13a3 3 0 0 1-5.500 1" fill="none" stroke="#fff" strokeWidth="1.200" />
          </svg>
        </button>
        <button aria-label="Updates" className="mr-[23px]">
          <svg width="21" height="22" viewBox="0 0 21 22" fill="none" stroke="#fff" strokeWidth="1.500">
            <path d="M2 8a8 8 0 0 1 15-1M18 2v5.500h-5M2 20v-5h5M2 15c1 3 4 5 7 5" />
            <circle cx="15.500" cy="16" r="5" fill="#ff9a0e" stroke="none" />
          </svg>
        </button>
        <button className="mr-[22px] text-center">ENG<br />IN</button>
        <button aria-label="Network, sound and battery" className="mr-[21px] flex items-center gap-[9px]">
          <svg width="21" height="21" viewBox="0 0 21 21" fill="none" stroke="#fff" strokeWidth="1.400">
            <path d="M18.500 9a9 9 0 1 0-9 9.500M1 7h17M1 13h8M9.500 1c-5 5-5 13 0 17.500M9.500 1c2.500 2 3.500 5 3.500 8" />
            <circle cx="15.500" cy="15.500" r="4.500" />
            <path d="M12.500 18.500l6-6" />
          </svg>
          <svg width="20" height="16" viewBox="0 0 20 16" fill="none" stroke="#fff" strokeWidth="1.400">
            <path d="M1 5.500v5h3.500L9 14.500v-13L4.500 5.500zM13 5.500l5.500 5.500M18.500 5.500L13 11" />
          </svg>
          <svg width="21" height="14" viewBox="0 0 21 14">
            <rect x="1" y="1" width="16" height="12" rx="3" fill="none" stroke="#fff" strokeWidth="1.500" />
            <rect x="3.500" y="3.500" width="11" height="7" rx="1" fill="#fff" />
            <path d="M18.500 4.500c2 .5 2 4.500 0 5z" fill="#fff" />
          </svg>
        </button>
        <button className="text-right">14:28<br />14-08-2023</button>
      </div>
    </nav>
  );
}

/* ---------- window ---------- */

function Tool({ label, children, disabled = false }: { label: string; children: React.ReactNode; disabled?: boolean }) {
  return (
    <button disabled={disabled} className={disabled ? "flex items-center gap-1 text-[#8c8c8c]" : "flex items-center gap-1"}>
      {children}
      <span>{label}</span>
    </button>
  );
}

export default function App() {
  return (
    <div className={"flex h-screen flex-col overflow-hidden bg-[#efefef] text-black " + UI}>
      <header className="flex h-[29px] shrink-0 items-center bg-[#f0f3fb] pl-[2px] text-[14px]">
        <AppLogo />
        <h1 className="ml-1 flex-1">ebook activity.xmi [modified] – Umbrello UML Modeller</h1>
        <div className="flex items-center gap-[46px] pr-[25px]">
          <button aria-label="Minimize"><svg width="13" height="13" viewBox="0 0 13 13" stroke="#000"><path d="M0 6.500h12" /></svg></button>
          <button aria-label="Restore">
            <svg width="13" height="13" viewBox="0 0 13 13" fill="none" stroke="#000">
              <rect x=".5" y="3.500" width="9" height="9" rx="1.500" />
              <path d="M3 3V2a1.500 1.500 0 0 1 1.500-1.500H10A2.500 2.500 0 0 1 12.500 3v5.500A1.500 1.500 0 0 1 11 10h-1" />
            </svg>
          </button>
          <button aria-label="Close"><svg width="13" height="13" viewBox="0 0 13 13" stroke="#000"><path d="M.5.500l12 12M12.500.500l-12 12" /></svg></button>
        </div>
      </header>
      <nav className="flex h-[24px] shrink-0 items-center gap-[15px] pl-[6px] text-[14px]">
        {["File", "Edit", "Diagram", "Code", "Settings", "Help"].map((m) => (
          <button key={m}>{m}</button>
        ))}
      </nav>
      <div role="toolbar" aria-label="Main" className="flex h-8 shrink-0 items-center border-t border-[#a0a0a0] pl-[7px] text-[12px] shadow-[inset_0_1px_0_#fff]">
        <div className="flex items-center gap-[14px]">
          <Tool label="New"><NewIcon /></Tool>
          <Tool label="Open"><OpenIcon /></Tool>
          <Tool label="Save"><SaveIcon /></Tool>
        </div>
        <button aria-label="Print" className="ml-3"><PrintIcon /></button>
        <button aria-label="Print preview" className="ml-2"><PrintIcon eye /></button>
        <span className="mx-[6px] h-6 border-l border-[#a0a0a0]" />
        <button aria-label="Undo"><UndoIcon /></button>
        <button aria-label="Redo" disabled className="ml-[6px]"><RedoIcon /></button>
        <div className="ml-[10px] flex items-center gap-[14px]">
          <Tool label="Cut" disabled><CutIcon /></Tool>
          <Tool label="Copy" disabled><CopyIcon /></Tool>
          <Tool label="Paste" disabled><PasteIcon /></Tool>
        </div>
        <span className="ml-3 mr-2 h-6 border-l border-[#a0a0a0]" />
        <Tool label="Find"><FindIcon /></Tool>
      </div>
      <div role="toolbar" aria-label="Work tools" className="flex h-8 shrink-0 items-center gap-[7px] border-t border-[#a0a0a0] pl-[9px] shadow-[inset_0_1px_0_#fff]">
        <button aria-label="Select" className="mr-1"><PointerIcon /></button>
        <button aria-label="Object"><ObjectIcon /></button>
        <button aria-label="Anchor"><AnchorIcon /></button>
        <button aria-label="Note"><NoteIcon /></button>
        <button aria-label="Box" className="ml-[3px]"><BoxIcon /></button>
        <button aria-label="Text label"><ABIcon /></button>
        <button aria-label="Synchronous message"><MessageIcon /></button>
        <button aria-label="Asynchronous message"><MessageIcon solid /></button>
      </div>
      <div className="flex min-h-0 flex-1 border-t border-[#a0a0a0]">
        <LeftDocks />
        <main className="ml-[5px] flex min-w-0 flex-1 flex-col border-x border-[#696969] pt-[1px]">
          <TabBar />
          <Canvas />
        </main>
        <aside className="ml-[6px] flex w-[87px] shrink-0 flex-col">
          <DockTitle mark="B" after="ird's eye view" />
          <div className="flex-1 border border-black bg-white" />
        </aside>
      </div>
      <StatusBar />
      <TaskBar />
    </div>
  );
}
